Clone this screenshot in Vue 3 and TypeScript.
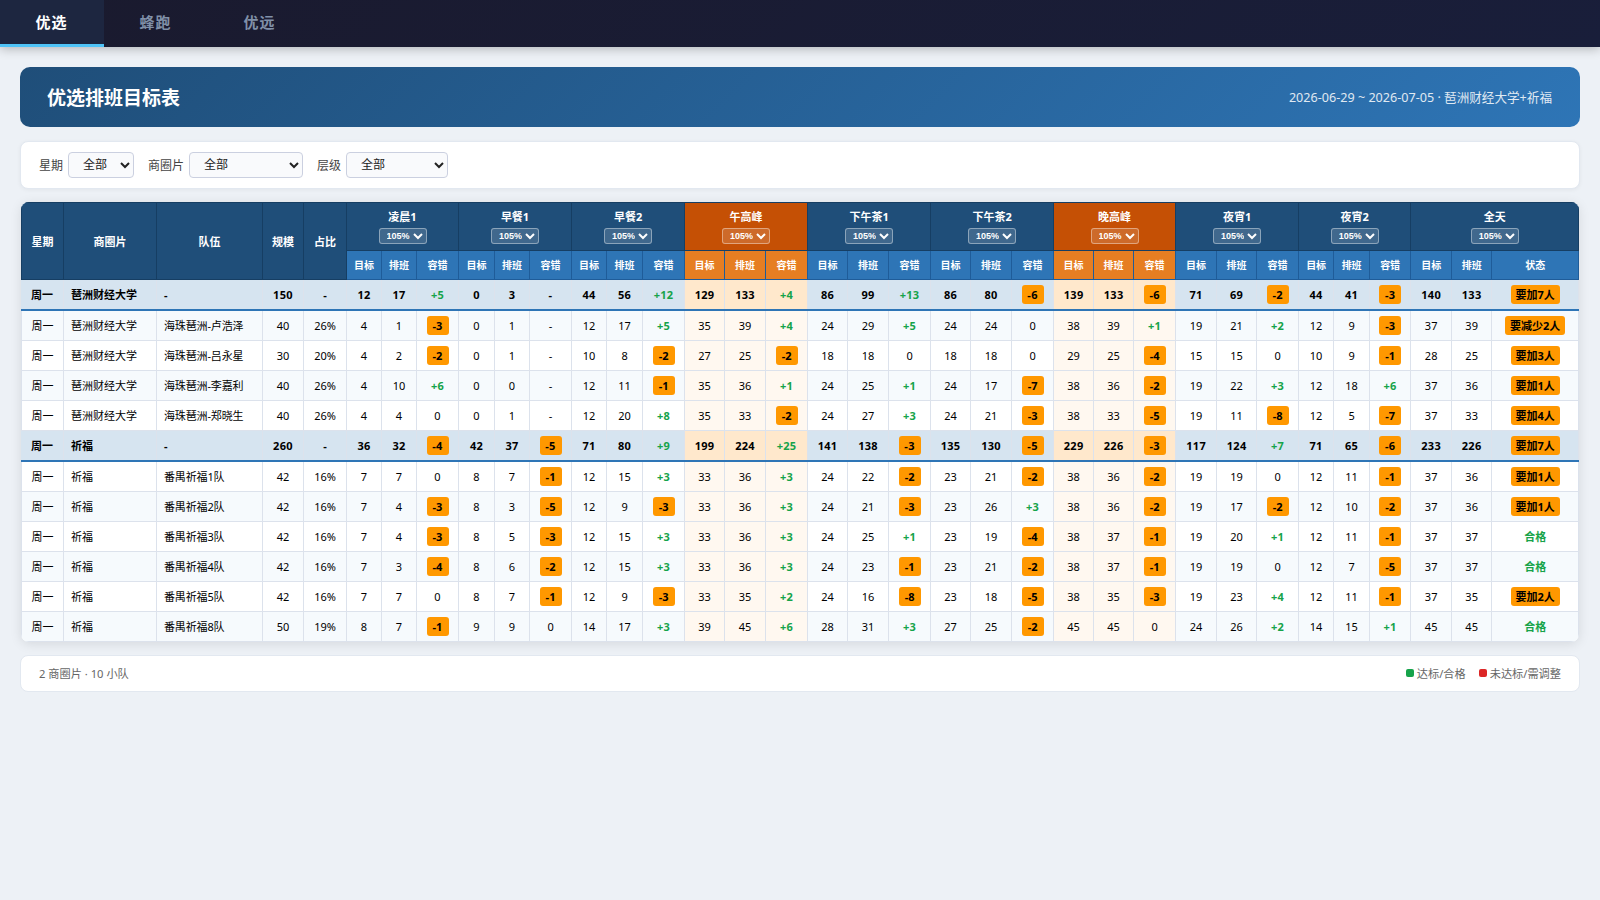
<script setup lang="ts">
import { ref } from 'vue'

interface Row {
  area: string
  team: string
  size: number
  share: string
  values: string[]
  status: string
  total: boolean
}

const tabs = ['优选', '蜂跑', '优远']
const active = ref('优选')

const filters = [
  { label: '星期', cls: 'w-day' },
  { label: '商圈片', cls: 'w-area' },
  { label: '层级', cls: 'w-level' },
]

const periods = [
  { name: '凌晨1', peak: false },
  { name: '早餐1', peak: false },
  { name: '早餐2', peak: false },
  { name: '午高峰', peak: true },
  { name: '下午茶1', peak: false },
  { name: '下午茶2', peak: false },
  { name: '晚高峰', peak: true },
  { name: '夜宵1', peak: false },
  { name: '夜宵2', peak: false },
]

const columnWidths = [
  43, 93, 106, 41, 43,
  35, 35, 42, 36, 35, 42, 35, 36, 42,
  40, 41, 42, 40, 41, 42, 40, 41, 42,
  40, 40, 42, 41, 40, 42, 35, 36, 41,
  41, 40, 87,
]

function row(area: string, team: string, size: number, share: string, data: string, status: string): Row {
  return { area, team, size, share, values: data.split(' '), status, total: team === '-' }
}

const rows: Row[] = [
  row('琶洲财经大学', '-', 150, '-', '12 17 +5 0 3 - 44 56 +12 129 133 +4 86 99 +13 86 80 -6 139 133 -6 71 69 -2 44 41 -3 140 133', '要加7人'),
  row('琶洲财经大学', '海珠琶洲-卢浩泽', 40, '26%', '4 1 -3 0 1 - 12 17 +5 35 39 +4 24 29 +5 24 24 0 38 39 +1 19 21 +2 12 9 -3 37 39', '要减少2人'),
  row('琶洲财经大学', '海珠琶洲-吕永星', 30, '20%', '4 2 -2 0 1 - 10 8 -2 27 25 -2 18 18 0 18 18 0 29 25 -4 15 15 0 10 9 -1 28 25', '要加3人'),
  row('琶洲财经大学', '海珠琶洲-李嘉利', 40, '26%', '4 10 +6 0 0 - 12 11 -1 35 36 +1 24 25 +1 24 17 -7 38 36 -2 19 22 +3 12 18 +6 37 36', '要加1人'),
  row('琶洲财经大学', '海珠琶洲-郑晓生', 40, '26%', '4 4 0 0 1 - 12 20 +8 35 33 -2 24 27 +3 24 21 -3 38 33 -5 19 11 -8 12 5 -7 37 33', '要加4人'),
  row('祈福', '-', 260, '-', '36 32 -4 42 37 -5 71 80 +9 199 224 +25 141 138 -3 135 130 -5 229 226 -3 117 124 +7 71 65 -6 233 226', '要加7人'),
  row('祈福', '番禺祈福1队', 42, '16%', '7 7 0 8 7 -1 12 15 +3 33 36 +3 24 22 -2 23 21 -2 38 36 -2 19 19 0 12 11 -1 37 36', '要加1人'),
  row('祈福', '番禺祈福2队', 42, '16%', '7 4 -3 8 3 -5 12 9 -3 33 36 +3 24 21 -3 23 26 +3 38 36 -2 19 17 -2 12 10 -2 37 36', '要加1人'),
  row('祈福', '番禺祈福3队', 42, '16%', '7 4 -3 8 5 -3 12 15 +3 33 36 +3 24 25 +1 23 19 -4 38 37 -1 19 20 +1 12 11 -1 37 37', '合格'),
  row('祈福', '番禺祈福4队', 42, '16%', '7 3 -4 8 6 -2 12 15 +3 33 36 +3 24 23 -1 23 21 -2 38 37 -1 19 19 0 12 7 -5 37 37', '合格'),
  row('祈福', '番禺祈福5队', 42, '16%', '7 7 0 8 7 -1 12 9 -3 33 35 +2 24 16 -8 23 18 -5 38 35 -3 19 23 +4 12 11 -1 37 35', '要加2人'),
  row('祈福', '番禺祈福8队', 50, '19%', '8 7 -1 9 9 0 14 17 +3 39 45 +6 28 31 +3 27 25 -2 45 45 0 24 26 +2 14 15 +1 45 45', '合格'),
]

const isPeak = (i: number) => periods[Math.floor(i / 3)]?.peak ?? false
const isWarn = (v: string) => v.length > 1 && v.startsWith('-')
const isGood = (v: string) => v.startsWith('+')
</script>

<template>
  <div class="page">
    <nav class="tabs">
      <button v-for="t in tabs" :key="t" :class="['tab', { active: t === active }]" @click="active = t">{{ t }}</button>
    </nav>

    <main class="content">
      <header class="banner">
        <h1>优选排班目标表</h1>
        <span class="range">2026-06-29 ~ 2026-07-05 · 琶洲财经大学+祈福</span>
      </header>

      <section class="filters">
        <label v-for="f in filters" :key="f.label" class="filter">
          <span>{{ f.label }}</span>
          <select :class="f.cls"><option>全部</option></select>
        </label>
      </section>

      <div class="table-wrap">
        <table>
          <colgroup>
            <col v-for="(w, i) in columnWidths" :key="i" :style="{ width: w + 'px' }" />
          </colgroup>
          <thead>
            <tr class="head-main">
              <th rowspan="2">星期</th>
              <th rowspan="2">商圈片</th>
              <th rowspan="2">队伍</th>
              <th rowspan="2">规模</th>
              <th rowspan="2">占比</th>
              <th v-for="p in periods" :key="p.name" colspan="3" :class="{ peak: p.peak }">
                <div class="period">{{ p.name }}</div>
                <select class="rate"><option>105%</option></select>
              </th>
              <th colspan="3">
                <div class="period">全天</div>
                <select class="rate"><option>105%</option></select>
              </th>
            </tr>
            <tr class="head-sub">
              <template v-for="p in periods" :key="p.name">
                <th :class="{ peak: p.peak }">目标</th>
                <th :class="{ peak: p.peak }">排班</th>
                <th :class="{ peak: p.peak }">容错</th>
              </template>
              <th>目标</th>
              <th>排班</th>
              <th>状态</th>
            </tr>
          </thead>
          <tbody>
            <tr v-for="(r, i) in rows" :key="i" :class="{ total: r.total }">
              <td>周一</td>
              <td class="left">{{ r.area }}</td>
              <td class="left team">{{ r.team }}</td>
              <td class="num">{{ r.size }}</td>
              <td>{{ r.share }}</td>
              <td v-for="(v, j) in r.values" :key="j" :class="['num', { peak: isPeak(j) }]">
                <span :class="{ warn: isWarn(v), good: isGood(v) }">{{ v }}</span>
              </td>
              <td><span :class="r.status === '合格' ? 'good' : 'warn'">{{ r.status }}</span></td>
            </tr>
          </tbody>
        </table>
      </div>

      <footer class="summary">
        <span>2 商圈片 · 10 小队</span>
        <div class="legend">
          <span class="key"><i class="dot ok"></i>达标/合格</span>
          <span class="key"><i class="dot bad"></i>未达标/需调整</span>
        </div>
      </footer>
    </main>
  </div>
</template>

<style>
body {
  background: #edf1f6;
}
</style>

<style scoped>
.page {
  min-height: 100vh;
  background: #edf1f6;
  font-family: 'Noto Sans', 'Noto Sans CJK SC', sans-serif;
  color: #000;
}
.page * {
  box-sizing: border-box;
}
.tabs {
  display: flex;
  height: 47px;
  background: linear-gradient(135deg, #1a1a2e, #191e3a);
  box-shadow: 0 2px 10px rgba(0, 0, 0, 0.25);
}
.tab {
  width: 104px;
  border: 0;
  border-bottom: 3px solid transparent;
  background: none;
  padding: 0 1px 0 0;
  color: #8090a8;
  font: 600 15px/1 'Noto Sans', 'Noto Sans CJK SC', sans-serif;
  letter-spacing: 1px;
}
.tab.active {
  color: #fff;
  background: #1d2640;
  border-bottom-color: #4fc3f7;
}
.content {
  padding: 20px;
}
.banner {
  display: flex;
  align-items: center;
  justify-content: space-between;
  height: 60px;
  padding: 0 28px 0 27px;
  border-radius: 10px;
  background: linear-gradient(135deg, #1f4e79, #2e75b6);
  color: #fff;
}
.banner h1 {
  margin: 0;
  padding-top: 2px;
  font-size: 19px;
  font-weight: 700;
  line-height: 1;
}
.range {
  padding-bottom: 2px;
  font-size: 12.6px;
  opacity: 0.85;
}
.filters {
  display: flex;
  align-items: center;
  gap: 14px;
  height: 48px;
  margin-top: 14px;
  padding: 0 18px;
  border: 1px solid #e2e8f0;
  border-radius: 8px;
  background: #fff;
  box-shadow: 0 1px 4px rgba(0, 0, 0, 0.05);
}
.filter {
  display: flex;
  align-items: center;
  gap: 5px;
  color: #444;
  font-size: 12px;
  white-space: nowrap;
}
.filter select {
  height: 26px;
  padding: 0 0 1px 10px;
  border: 1px solid #cbd0e0;
  border-radius: 4px;
  background: #f9fafc;
  color: #222;
  font: 12px 'Noto Sans', 'Noto Sans CJK SC', sans-serif;
}
.filter .w-day { width: 66px; }
.filter .w-area { width: 114px; }
.filter .w-level { width: 102px; }
.table-wrap {
  margin: 13px 1px 0;
  border-radius: 8px;
  overflow: hidden;
  background: #fff;
  box-shadow: 0 2px 12px rgba(0, 0, 0, 0.1);
}
table {
  width: 1558px;
  table-layout: fixed;
  border-collapse: separate;
  border-spacing: 0;
  font-size: 11px;
  line-height: 16px;
}
th,
td {
  padding: 0;
  text-align: center;
  white-space: nowrap;
}
th {
  color: #fff;
  font-weight: 700;
}
.head-main th {
  height: 49px;
  border: solid #163e63;
  border-width: 1px 1px 1px 0;
  background: #1f4e79;
}
.head-main th[rowspan] {
  padding-top: 2px;
}
.head-main th:first-child {
  border-left-width: 1px;
}
.head-main th.peak {
  background: #c55005;
}
.head-sub th {
  height: 29px;
  border: solid #1f5c99;
  border-width: 0 1px 1px 0;
  background: #2e75b6;
  font-size: 10px;
}
.head-sub th.peak {
  background: #e67e22;
}
.period {
  height: 17px;
  line-height: 13px;
}
.rate {
  display: block;
  width: 48px;
  height: 16px;
  margin: 1px auto 0;
  padding: 0 0 0 3px;
  border: 1px solid rgba(255, 255, 255, 0.4);
  border-radius: 3px;
  background: rgba(255, 255, 255, 0.15);
  color: #fff;
  font: 700 9px 'Liberation Sans', sans-serif;
}
td {
  height: 30px;
  border: solid #dce2ec;
  border-width: 0 1px 1px 0;
}
td:first-child {
  border-left-width: 1px;
}
td.left {
  padding-left: 7px;
  text-align: left;
}
tbody tr:nth-child(even) td {
  background: #f6fafd;
}
tbody td.peak,
tbody tr:nth-child(even) td.peak {
  background: #fff8f0;
}
td.team {
  letter-spacing: -0.15px;
}
/* Side rules are inset shadows so the bottom rule stays unbroken at cell joints. */
tbody tr.total td {
  height: 31px;
  padding-right: 1px;
  border-width: 0 0 2px;
  border-bottom-color: #2e75b6;
  background: #d6e4f0;
  box-shadow: inset -1px 0 #dce2ec;
  font-weight: 700;
}
tbody tr.total td.num {
  letter-spacing: 0.3px;
}
tbody tr.total td.peak {
  background: #ffe8cc;
}
.good {
  color: #16a34a;
  font-weight: 700;
}
.num .good {
  letter-spacing: 0.3px;
}
.warn {
  display: inline-block;
  height: 19px;
  padding: 0 5px;
  border-radius: 3px;
  background: #ff9800;
  font-weight: 700;
  line-height: 19px;
  vertical-align: middle;
}
.num .warn {
  width: 22px;
}
.summary {
  display: flex;
  align-items: center;
  justify-content: space-between;
  height: 37px;
  margin-top: 13px;
  padding: 0 18px 2px 18px;
  border: 1px solid #e2e8f0;
  border-radius: 8px;
  background: #fff;
  color: #666;
  font-size: 11.2px;
}
.legend {
  display: flex;
  gap: 13px;
}
.key {
  display: flex;
  align-items: center;
  gap: 3px;
}
.dot {
  width: 8px;
  height: 8px;
  border-radius: 2px;
}
.dot.ok { background: #16a34a; }
.dot.bad { background: #dc2626; }
</style>
